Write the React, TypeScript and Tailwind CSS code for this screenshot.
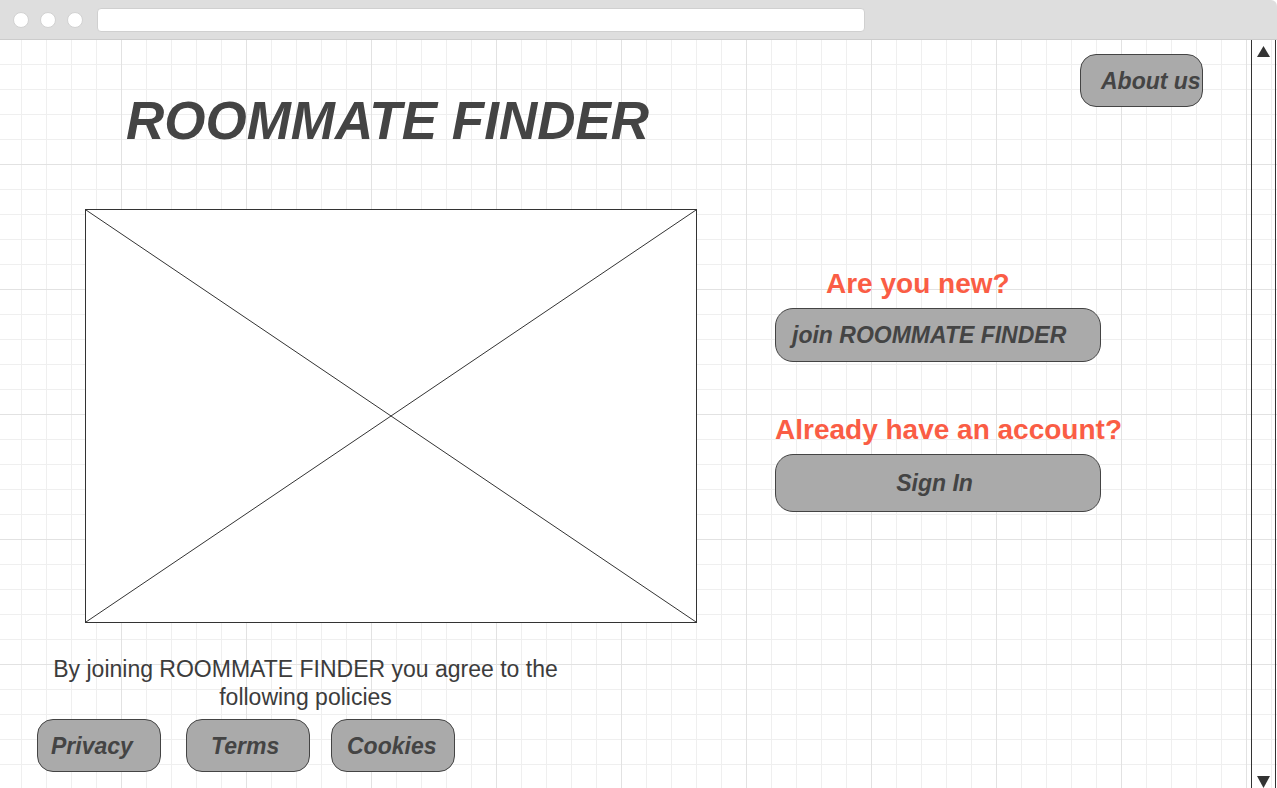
import React from 'react';

const btn =
  'flex items-center border border-[#444] bg-[#aaaaaa] text-[#444] font-bold italic text-[23px] leading-none whitespace-nowrap';

function ImagePlaceholder() {
  return (
    <div className="relative ml-[85px] mt-[62px] w-[612px] h-[414px] border border-[#333] bg-white">
      {/* cross lines of the empty image frame */}
      <svg className="absolute inset-0 w-full h-full" viewBox="0 0 100 100" preserveAspectRatio="none">
        <line x1="0" y1="0" x2="100" y2="100" stroke="#333" strokeWidth="1" vectorEffect="non-scaling-stroke" />
        <line x1="100" y1="0" x2="0" y2="100" stroke="#333" strokeWidth="1" vectorEffect="non-scaling-stroke" />
      </svg>
    </div>
  );
}

export default function App() {
  return (
    <div className="w-[1277px] h-[788px] overflow-hidden bg-white flex flex-col font-['Liberation_Sans',Arial,sans-serif]">
      {/* browser chrome */}
      <div className="h-[40px] shrink-0 bg-[#dedede] border-b border-[#cccccc] rounded-tr-[6px] flex items-center pl-[13px] pt-[1px]">
        <div className="flex gap-[11px]">
          <div className="w-[16px] h-[16px] rounded-full bg-white border border-[#d2d2d2]" />
          <div className="w-[16px] h-[16px] rounded-full bg-white border border-[#d2d2d2]" />
          <div className="w-[16px] h-[16px] rounded-full bg-white border border-[#d2d2d2]" />
        </div>
        <div className="ml-[14px] w-[768px] h-[24px] rounded-[4px] bg-white border border-[#d0d0d0]" />
      </div>

      {/* page with grid */}
      <div className="flex-1 flex bg-white bg-[linear-gradient(to_right,#e2e2e2_1px,transparent_1px),linear-gradient(to_bottom,#e2e2e2_1px,transparent_1px),linear-gradient(to_right,#efefef_1px,transparent_1px),linear-gradient(to_bottom,#efefef_1px,transparent_1px)] bg-[size:125px_125px,125px_125px,25px_25px,25px_25px] bg-[position:121px_124px,121px_124px,21px_24px,21px_24px]">
        <div className="flex-1 flex">
          {/* left column */}
          <div className="w-[775px] shrink-0 flex flex-col">
            <h1 className="ml-[126px] mt-[54px] text-[53px] leading-none font-bold italic text-[#444] whitespace-nowrap">
              ROOMMATE FINDER
            </h1>

            <ImagePlaceholder />

            <p className="ml-[30px] mt-[33px] w-[551px] text-center text-[23px] leading-[27.5px] text-[#3c3c3c]">
              By joining ROOMMATE FINDER you agree to the following policies
            </p>

            <div className="ml-[37px] mt-[8px] flex">
              <button className={`${btn} w-[124px] h-[53px] rounded-[16px] pl-[13px] pt-[2px]`}>Privacy</button>
              <button className={`${btn} ml-[25px] w-[124px] h-[53px] rounded-[16px] pl-[24px] pt-[2px]`}>Terms</button>
              <button className={`${btn} ml-[21px] w-[124px] h-[53px] rounded-[16px] pl-[15px] pt-[2px]`}>Cookies</button>
            </div>
          </div>

          {/* right column */}
          <div className="flex-1 flex flex-col">
            <button className={`${btn} self-end mr-[48px] mt-[14px] w-[123px] h-[53px] rounded-[16px] pl-[20px] pt-[2px]`}>
              About us
            </button>

            <h2 className="ml-[51px] mt-[163px] text-[28px] leading-none font-bold text-[#fa5d45] whitespace-nowrap">
              Are you new?
            </h2>
            <button className={`${btn} mt-[10px] w-[326px] h-[54px] rounded-[18px] pl-[16px] pt-[1px]`}>
              join ROOMMATE FINDER
            </button>

            <h2 className="mt-[54px] text-[28px] leading-none font-bold text-[#fa5d45] whitespace-nowrap">
              Already have an account?
            </h2>
            <button className={`${btn} mt-[10px] w-[326px] h-[58px] rounded-[18px] justify-center pr-[7px]`}>
              Sign In
            </button>
          </div>
        </div>

        {/* scrollbar */}
        <div className="w-[25px] shrink-0 border-x border-[#333] flex flex-col items-center justify-between pt-[6px]">
          <svg width="13" height="11" viewBox="0 0 13 11">
            <polygon points="6.5,0 13,11 0,11" fill="#333" />
          </svg>
          <svg width="13" height="12" viewBox="0 0 13 12">
            <polygon points="0,0 13,0 6.5,12" fill="#333" />
          </svg>
        </div>
        <div className="w-[1px] shrink-0" />
      </div>
    </div>
  );
}
